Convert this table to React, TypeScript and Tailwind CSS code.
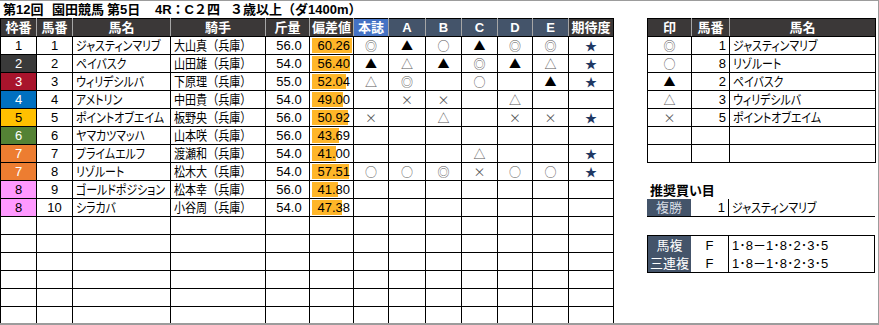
import React from 'react';

type Horse = {
  waku: number;
  ban: number;
  name: string;
  jockey: string;
  kinryo: string;
  dev: string;
  bar: number;
  marks: string[];
  star: boolean;
};

const horses: Horse[] = [
  { waku: 1, ban: 1, name: 'ジャスティンマリブ', jockey: '大山真（兵庫）', kinryo: '56.0', dev: '60.26', bar: 40, marks: ['◎', '▲', '○', '▲', '◎', '◎'], star: true },
  { waku: 2, ban: 2, name: 'ペイバスク', jockey: '山田雄（兵庫）', kinryo: '54.0', dev: '56.40', bar: 38, marks: ['▲', '△', '▲', '◎', '▲', '△'], star: true },
  { waku: 3, ban: 3, name: 'ウィリデシルバ', jockey: '下原理（兵庫）', kinryo: '55.0', dev: '52.04', bar: 34, marks: ['△', '◎', '', '○', '', '▲'], star: true },
  { waku: 4, ban: 4, name: 'アメトリン', jockey: '中田貴（兵庫）', kinryo: '54.0', dev: '49.00', bar: 31, marks: ['', '×', '×', '', '△', ''], star: false },
  { waku: 5, ban: 5, name: 'ポイントオブエイム', jockey: '板野央（兵庫）', kinryo: '56.0', dev: '50.92', bar: 36, marks: ['×', '', '△', '', '×', '×'], star: true },
  { waku: 6, ban: 6, name: 'ヤマカツマッハ', jockey: '山本咲（兵庫）', kinryo: '56.0', dev: '43.69', bar: 27, marks: ['', '', '', '', '', ''], star: false },
  { waku: 7, ban: 7, name: 'プライムエルフ', jockey: '渡瀬和（兵庫）', kinryo: '54.0', dev: '41.00', bar: 24, marks: ['', '', '', '△', '', ''], star: true },
  { waku: 7, ban: 8, name: 'リゾルート', jockey: '松木大（兵庫）', kinryo: '54.0', dev: '57.51', bar: 37, marks: ['○', '○', '◎', '×', '○', '○'], star: true },
  { waku: 8, ban: 9, name: 'ゴールドポジション', jockey: '松本幸（兵庫）', kinryo: '56.0', dev: '41.80', bar: 26, marks: ['', '', '', '', '', ''], star: false },
  { waku: 8, ban: 10, name: 'シラカバ', jockey: '小谷周（兵庫）', kinryo: '54.0', dev: '47.38', bar: 30, marks: ['', '', '', '', '', ''], star: false },
];

const wakuColor: Record<number, string> = {
  1: 'bg-white text-black',
  2: 'bg-[#3a3a3a] text-white',
  3: 'bg-[#a8142c] text-white',
  4: 'bg-[#0070c0] text-white',
  5: 'bg-[#ffc000] text-black',
  6: 'bg-[#548235] text-white',
  7: 'bg-[#ed7d31] text-white',
  8: 'bg-[#ff99ff] text-black',
};

const picks = [
  { mark: '◎', ban: 1, name: 'ジャスティンマリブ' },
  { mark: '○', ban: 8, name: 'リゾルート' },
  { mark: '▲', ban: 2, name: 'ペイバスク' },
  { mark: '△', ban: 3, name: 'ウィリデシルバ' },
  { mark: '×', ban: 5, name: 'ポイントオブエイム' },
];

const markColor = (m: string) => (m === '▲' ? 'text-black' : 'text-[#595959]');

const th = 'border border-black border-x-[#a6a6a6] text-white font-bold text-[13px] text-center p-0';
const td = 'border border-black p-0';
const mark = "font-['Noto_Sans_CJK_JP',sans-serif] text-[12px] [font-feature-settings:normal]";

// narrow katakana like Meiryo UI
const Narrow = ({ children, k = 'name' }: { children: React.ReactNode; k?: 'name' | 'jockey' }) => (
  <span
    className={`inline-block whitespace-nowrap origin-left ${
      k === 'name' ? 'scale-x-[0.84]' : 'scale-x-[0.85] [font-feature-settings:normal]'
    }`}
  >
    {children}
  </span>
);

const App = () => {
  return (
    <div className="w-[879px] h-[325px] bg-white border-t border-r border-b-2 border-[#9c9c9c] font-['Liberation_Sans','Noto_Sans_CJK_JP',sans-serif] text-[12px] text-black leading-none overflow-hidden [font-feature-settings:'palt']">
      {/* title */}
      <div className="h-[17px] flex items-center pl-[3px] text-[13px] font-bold whitespace-nowrap [font-feature-settings:normal]">
        <span className="w-[49px] shrink-0">第12回</span>
        <span className="w-[55px] shrink-0">園田競馬</span>
        <span className="w-[48px] shrink-0">第5日</span>
        <span className="w-[75px] shrink-0">4R：C２四</span>
        <span>３歳以上（ダ1400m）</span>
      </div>

      <div className="flex">
        {/* main table */}
        <table className="table-fixed border-collapse w-[613px] shrink-0">
          <colgroup>
            <col className="w-[36px]" />
            <col className="w-[36px]" />
            <col className="w-[98px]" />
            <col className="w-[95px]" />
            <col className="w-[44px]" />
            <col className="w-[44px]" />
            <col className="w-[35px]" />
            <col className="w-[37px]" />
            <col className="w-[36px]" />
            <col className="w-[36px]" />
            <col className="w-[35px]" />
            <col className="w-[36px]" />
            <col className="w-[45px]" />
          </colgroup>
          <thead>
            <tr className="h-[18px]">
              <th className={`${th} bg-[#3b3838] border-l-black`}>枠番</th>
              <th className={`${th} bg-[#3b3838]`}>馬番</th>
              <th className={`${th} bg-[#3b3838]`}>馬名</th>
              <th className={`${th} bg-[#3b3838]`}>騎手</th>
              <th className={`${th} bg-[#3b3838]`}>斤量</th>
              <th className={`${th} bg-[#3b3838]`}>偏差値</th>
              <th className={`${th} bg-[#4472c4]`}>本誌</th>
              <th className={`${th} bg-[#44546a]`}>A</th>
              <th className={`${th} bg-[#44546a]`}>B</th>
              <th className={`${th} bg-[#44546a]`}>C</th>
              <th className={`${th} bg-[#44546a]`}>D</th>
              <th className={`${th} bg-[#44546a]`}>E</th>
              <th className={`${th} bg-[#3b3838] border-r-black`}>期待度</th>
            </tr>
          </thead>
          <tbody>
            {horses.map((h) => (
              <tr key={h.ban} className="h-[18px]">
                <td className={`${td} text-center text-[13px] ${wakuColor[h.waku]}`}>{h.waku}</td>
                <td className={`${td} text-center text-[13px]`}>{h.ban}</td>
                <td className={`${td} pl-[3px] text-[13px]`}>
                  <Narrow>{h.name}</Narrow>
                </td>
                <td className={`${td} pl-[3px] text-[13px]`}>
                  <Narrow k="jockey">{h.jockey}</Narrow>
                </td>
                <td className={`${td} text-center text-[13px] pl-[3px]`}>{h.kinryo}</td>
                <td
                  className={`${td} text-right text-[13px] pr-[3px]`}
                  style={{
                    background: `linear-gradient(to right, transparent 2px, #ffb628 2px, #ffb628 ${2 + h.bar}px, transparent ${2 + h.bar}px) center / 100% calc(100% - 2px) no-repeat`,
                  }}
                >
                  {h.dev}
                </td>
                {h.marks.map((m, i) => (
                  <td key={i} className={`${td} text-center ${mark} ${markColor(m)}`}>
                    {m}
                  </td>
                ))}
                <td className={`${td} text-center ${mark} text-[#1f3864]`}>{h.star ? '★' : ''}</td>
              </tr>
            ))}
            {[0, 1, 2, 3, 4, 5].map((r) => (
              <tr key={`e${r}`} className="h-[18px]">
                {Array.from({ length: 13 }).map((_, i) => (
                  <td key={i} className={td}></td>
                ))}
              </tr>
            ))}
          </tbody>
        </table>

        {/* right panel */}
        <div className="pl-[33px] w-[261px]">
          <table className="table-fixed border-collapse w-[228px]">
            <colgroup>
              <col className="w-[44px]" />
              <col className="w-[38px]" />
              <col className="w-[146px]" />
            </colgroup>
            <thead>
              <tr className="h-[18px]">
                <th className={`${th} bg-[#3b3838] border-l-black`}>印</th>
                <th className={`${th} bg-[#3b3838]`}>馬番</th>
                <th className={`${th} bg-[#3b3838] border-r-black`}>馬名</th>
              </tr>
            </thead>
            <tbody>
              {picks.map((p) => (
                <tr key={p.ban} className="h-[18px]">
                  <td className={`${td} text-center ${mark} ${markColor(p.mark)}`}>{p.mark}</td>
                  <td className={`${td} text-right text-[13px] pr-[3px]`}>{p.ban}</td>
                  <td className={`${td} pl-[3px] text-[13px]`}>
                    <Narrow>{p.name}</Narrow>
                  </td>
                </tr>
              ))}
              {[0, 1].map((r) => (
                <tr key={`pe${r}`} className="h-[18px]">
                  <td className={td}></td>
                  <td className={td}></td>
                  <td className={td}></td>
                </tr>
              ))}
            </tbody>
          </table>

          <div className="h-[18px]"></div>
          <div className="h-[18px] flex items-end pb-[2px] pl-[3px] font-bold text-[13px]">推奨買い目</div>

          <div className="w-[228px] h-[18px] flex border-b border-black">
            <div className="w-[44px] bg-[#44546a] text-[#d6dce4] text-[13px] flex items-center justify-center">複勝</div>
            <div className="w-[38px] border-r border-black pr-[3px] text-[13px] flex items-center justify-end">1</div>
            <div className="flex-1 pl-[3px] flex items-center text-[13px]">
              <Narrow>ジャスティンマリブ</Narrow>
            </div>
          </div>

          <div className="h-[18px]"></div>

          <div className="w-[228px] border border-black">
            {['馬複', '三連複'].map((k) => (
              <div key={k} className="h-[18px] flex">
                <div className="w-[43px] bg-[#44546a] text-white text-[13px] flex items-center justify-center">{k}</div>
                <div className="w-[38px] border-r border-black text-[13px] flex items-center justify-center">F</div>
                <div className="flex-1 pl-[3px] flex items-center text-[13px] whitespace-nowrap">1･8－1･8･2･3･5</div>
              </div>
            ))}
          </div>
        </div>
      </div>
    </div>
  );
};

export default App;
